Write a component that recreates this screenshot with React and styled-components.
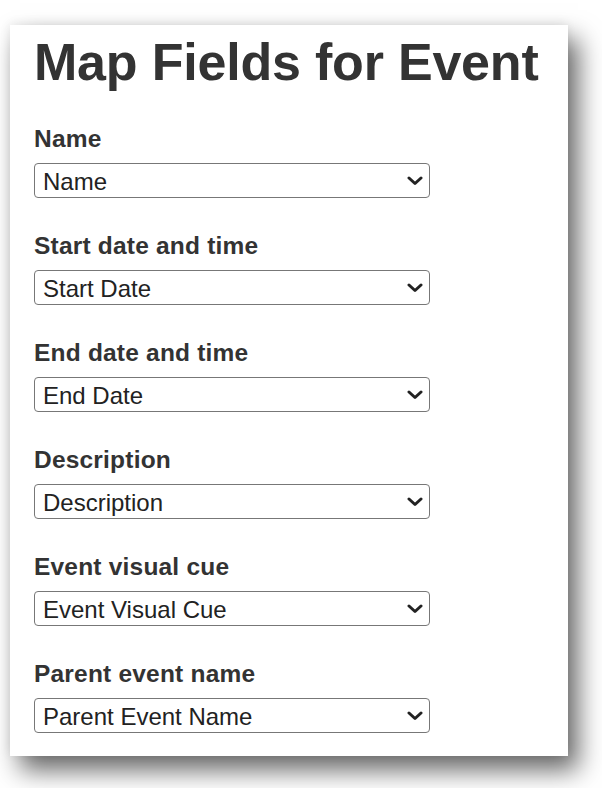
import React from "react";
import styled, { createGlobalStyle } from "styled-components";

const GlobalStyle = createGlobalStyle`
  body {
    margin: 0;
    background: #fff;
    font-family: "Liberation Sans", Arial, sans-serif;
  }
`;

const Page = styled.div`
  padding: 25px 0 0 10px;
  min-height: 788px;
  box-sizing: border-box;
`;

const Card = styled.div`
  width: 558px;
  height: 731px;
  box-sizing: border-box;
  background: #fff;
  padding: 7px 24px 23px 24px;
  box-shadow: 10px 14px 24px rgba(0, 0, 0, 0.6), -1px -2px 10px rgba(0, 0, 0, 0.07);
  display: flex;
  flex-direction: column;
`;

const Title = styled.h1`
  margin: 0 0 33px 0;
  font-size: 52px;
  line-height: 60px;
  font-weight: 700;
  color: #333;
  letter-spacing: -0.2px;
`;

const Fields = styled.div`
  display: flex;
  flex-direction: column;
  gap: 34px;
`;

const Field = styled.div`
  display: flex;
  flex-direction: column;
  gap: 10px;
`;

const Label = styled.label`
  font-size: 24.5px;
  line-height: 28px;
  font-weight: 700;
  color: #333;
  letter-spacing: 0.2px;
`;

const SelectWrap = styled.div`
  position: relative;
  width: 396px;
  height: 35px;
`;

const Select = styled.select`
  appearance: none;
  -webkit-appearance: none;
  width: 100%;
  height: 35px;
  box-sizing: border-box;
  margin: 0;
  padding: 2px 30px 0 8px;
  border: 1px solid #777;
  border-radius: 4px;
  background: #fff;
  font-family: "Liberation Sans", Arial, sans-serif;
  font-size: 24px;
  line-height: 31px;
  color: #222;
  outline: none;
`;

const Chevron = styled.svg`
  position: absolute;
  right: 7px;
  top: 13px;
  width: 16px;
  height: 10px;
  pointer-events: none;
`;

const fields = [
  { label: "Name", value: "Name" },
  { label: "Start date and time", value: "Start Date" },
  { label: "End date and time", value: "End Date" },
  { label: "Description", value: "Description" },
  { label: "Event visual cue", value: "Event Visual Cue" },
  { label: "Parent event name", value: "Parent Event Name" },
];

const App = () => {
  return (
    <Page>
      <GlobalStyle />
      <Card>
        <Title>Map Fields for Event</Title>
        <Fields>
          {fields.map((f) => (
            <Field key={f.label}>
              <Label>{f.label}</Label>
              <SelectWrap>
                <Select defaultValue={f.value}>
                  <option>{f.value}</option>
                </Select>
                <Chevron viewBox="0 0 16 10">
                  <path
                    d="M2 2 L8 7.5 L14 2"
                    fill="none"
                    stroke="#222"
                    strokeWidth="3"
                    strokeLinecap="round"
                    strokeLinejoin="round"
                  />
                </Chevron>
              </SelectWrap>
            </Field>
          ))}
        </Fields>
      </Card>
    </Page>
  );
};

export default App;
